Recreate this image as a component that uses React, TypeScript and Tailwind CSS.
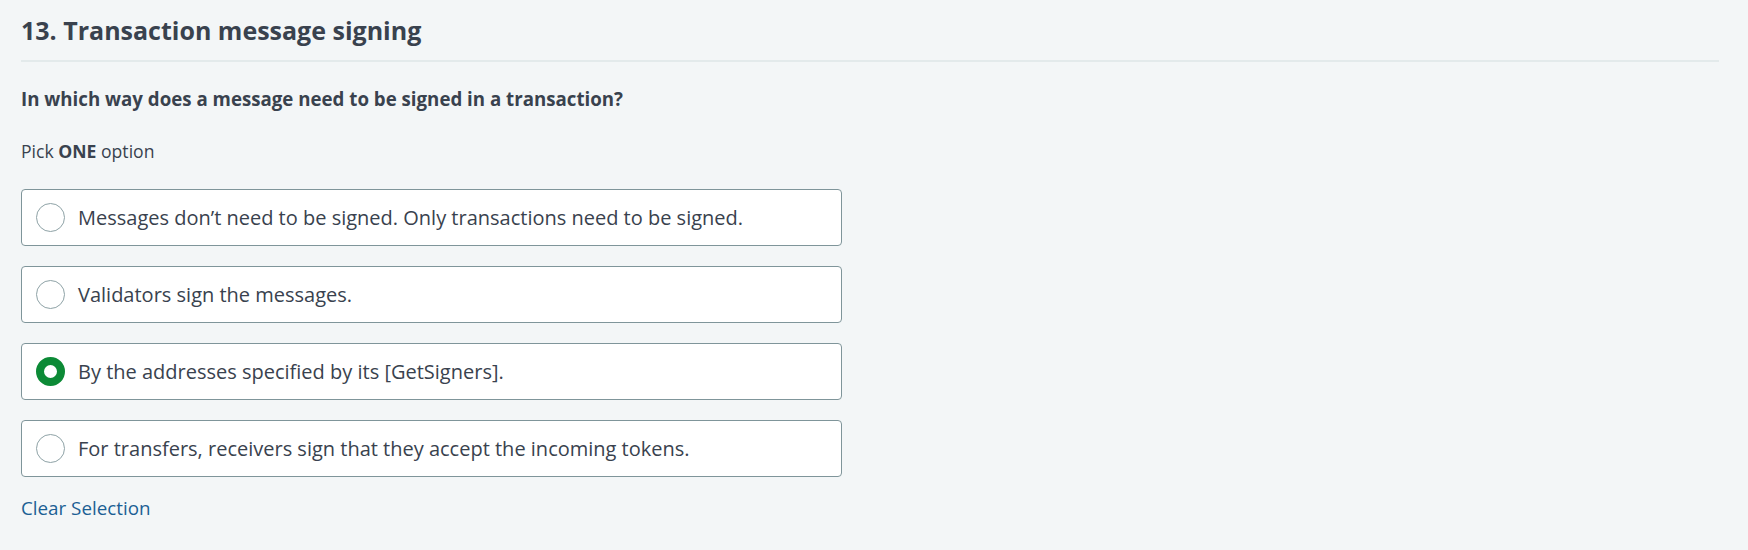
import { useState } from "react";

const options = [
  "Messages don’t need to be signed. Only transactions need to be signed.",
  "Validators sign the messages.",
  "By the addresses specified by its [GetSigners].",
  "For transfers, receivers sign that they accept the incoming tokens.",
];

export default function App() {
  const [selected, setSelected] = useState<number | null>(2);

  return (
    <div className="w-full h-[550px] bg-[#f3f6f7] pl-[21px] pr-[29px] pt-3 text-[#39424e] font-['Open_Sans',sans-serif]">
      {/* Titulo */}
      <div className="border-b-2 border-[#e3eaeb] pb-[12px]">
        <h1 className="text-[25px] leading-[36px] font-bold">13. Transaction message signing</h1>
      </div>

      {/* Pregunta */}
      <p className="mt-[24px] text-[18.7px] leading-[26px] font-bold">
        In which way does a message need to be signed in a transaction?
      </p>
      <p className="mt-[26px] text-[17.6px] leading-[26px]">
        Pick <span className="font-bold">ONE</span> option
      </p>

      {/* Opciones */}
      <div className="mt-[25px] flex flex-col gap-5 w-[821px]">
        {options.map((text, i) => (
          <OptionRow
            key={i}
            text={text}
            checked={selected === i}
            onClick={() => setSelected(i)}
          />
        ))}
      </div>

      <button
        onClick={() => setSelected(null)}
        className="mt-[18px] text-[18.8px] leading-[26px] text-[#1b5f94]"
      >
        Clear Selection
      </button>
    </div>
  );
}

function OptionRow({
  text,
  checked,
  onClick,
}: {
  text: string;
  checked: boolean;
  onClick: () => void;
}) {
  return (
    <div
      onClick={onClick}
      className="h-[57px] flex items-center gap-[13px] pl-[14px] bg-white border border-[#7f959a] rounded-[4px] cursor-pointer"
    >
      {checked ? (
        <div className="w-[29px] h-[29px] rounded-full border-[8px] border-[#0c8a36] bg-white" />
      ) : (
        <div className="w-[29px] h-[29px] rounded-full border border-[#8ea2a6] bg-white" />
      )}
      <span className="text-[20px] leading-[26px]">{text}</span>
    </div>
  );
}
